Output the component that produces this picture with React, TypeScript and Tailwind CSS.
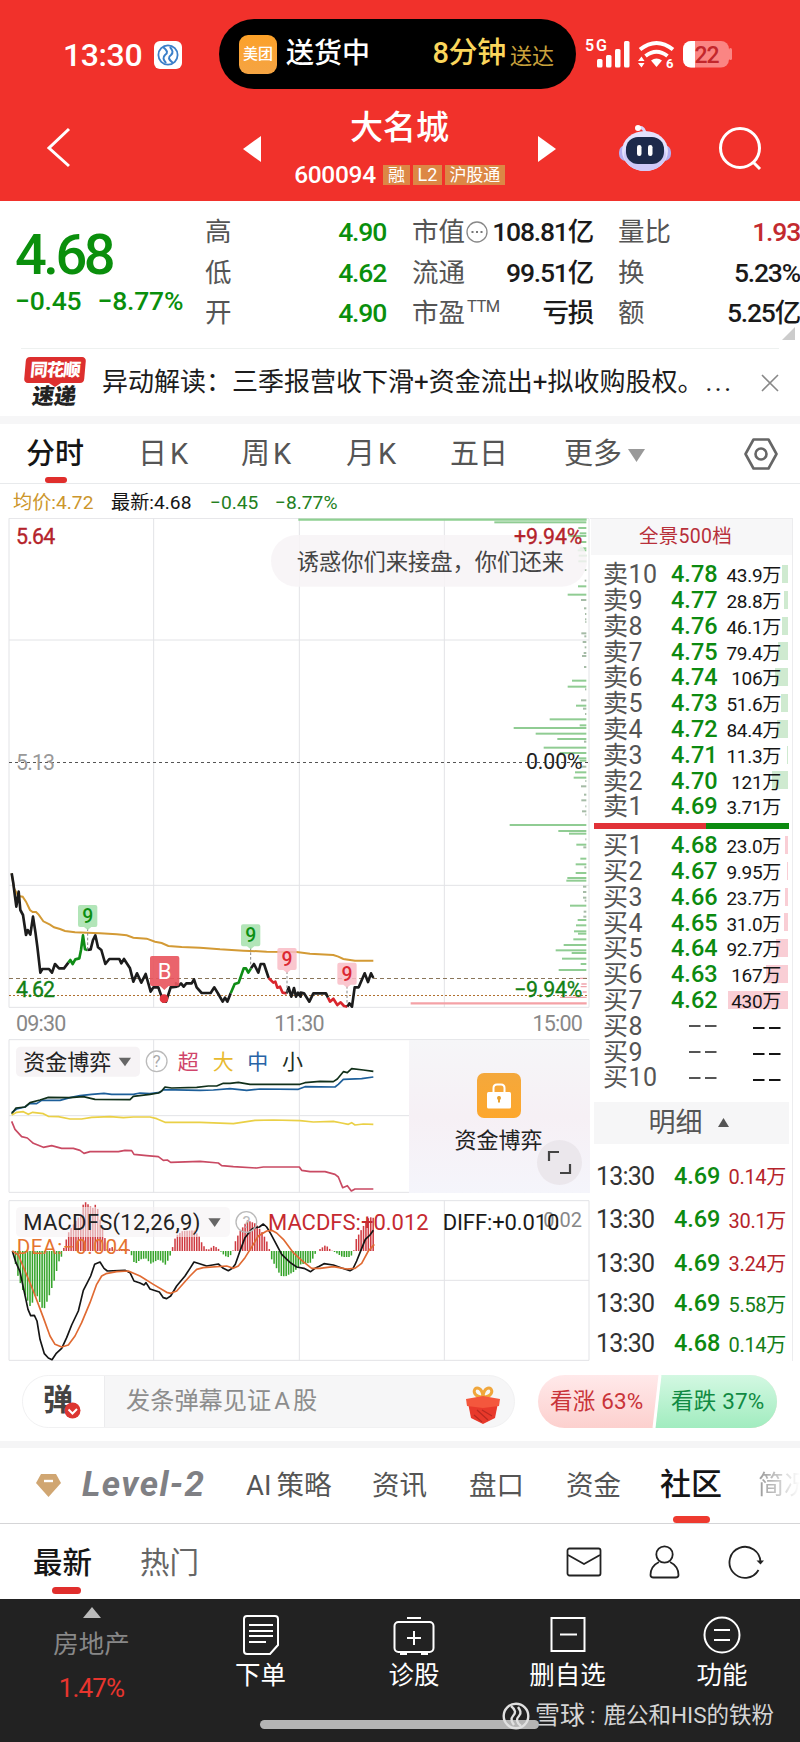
import type { ReactNode } from "react";
import clsx from "clsx";

const sells = [
  ["10", "4.78", "43.9万", 6],
  ["9", "4.77", "28.8万", 4],
  ["8", "4.76", "46.1万", 6],
  ["7", "4.75", "79.4万", 10],
  ["6", "4.74", "106万", 13],
  ["5", "4.73", "51.6万", 7],
  ["4", "4.72", "84.4万", 11],
  ["3", "4.71", "11.3万", 1],
  ["2", "4.70", "121万", 16],
  ["1", "4.69", "3.71万", 0],
] as const;

const buys = [
  ["1", "4.68", "23.0万", 3],
  ["2", "4.67", "9.95万", 1],
  ["3", "4.66", "23.7万", 3],
  ["4", "4.65", "31.0万", 4],
  ["5", "4.64", "92.7万", 12],
  ["6", "4.63", "167万", 22],
  ["7", "4.62", "430万", 60],
  ["8", "", "", 0],
  ["9", "", "", 0],
  ["10", "", "", 0],
] as const;

const trades = [
  ["4.69", "0.14万", true, "h-[43px]"],
  ["4.69", "30.1万", true, "h-[44px]"],
  ["4.69", "3.24万", true, "h-[43px]"],
  ["4.69", "5.58万", false, "h-[38px]"],
  ["4.68", "0.14万", false, "h-[42px]"],
] as const;

// [y, length] of the order depth bars along the right edge of the chart
const depth = [
  [37, 276], [54, 24], [70, 20], [78, 55], [96, 22], [115, 20], [121, 26], [137, 23], [154, 24], [180, 6],
  [212, 5], [229, 25], [254, 56], [270, 16], [295, 7], [312, 4], [328, 4], [336, 3], [370, 15], [379, 6],
  [396, 11], [412, 5], [429, 8], [438, 13], [471, 7], [512, 43], [530, 56], [538, 4], [571, 16], [587, 31],
  [596, 10], [612, 4], [628, 110], [646, 20], [654, 218], [671, 152], [687, 87], [695, 7], [713, 128],
  [729, 80], [745, 24], [752, 20], [770, 16], [787, 34], [803, 38], [813, 3], [829, 16], [854, 7], [871, 15],
  [889, 3], [904, 13], [914, 3], [945, 230], [963, 84], [971, 52], [988, 3], [1004, 30], [1012, 9],
  [1046, 18], [1063, 32], [1072, 6], [1089, 32], [1104, 57], [1112, 60], [1130, 10], [1146, 10], [1163, 10],
  [1172, 5], [1187, 49], [1205, 8], [1220, 9], [1230, 26], [1246, 31], [1264, 37], [1271, 25], [1288, 39],
  [1305, 68], [1321, 92], [1329, 44], [1346, 73], [1362, 17], [1380, 83],
];

const envelope = [
  [37, 0], [50, -70], [65, -115], [90, -170], [105, -125], [128, -180], [145, -135], [160, -90], [175, -30],
  [187, -8], [190, 15], [205, 60], [225, 90], [240, 110], [250, 150], [262, 140], [275, 128], [287, 143],
  [300, 85], [310, 50], [320, 5], [335, 12], [345, 4], [385, 4], [392, -12], [402, -40], [420, -25], [435, -22],
  [450, -38], [475, -25], [495, -42], [510, -10], [515, 10], [525, 45], [545, 60], [580, 62], [595, 45],
  [605, 20], [620, 2], [640, 16], [655, 5], [665, -8], [680, -20], [695, -8], [700, 20], [715, 55], [740, 92],
  [765, 82], [785, 55], [800, 25], [806, 4], [810, -20], [840, -75], [855, -76], [880, -62], [900, -40],
  [930, -35], [945, -5], [955, 4], [975, 18], [990, 3], [1005, -5], [1025, -18], [1050, -18], [1060, 4],
  [1066, 35], [1085, 70], [1105, 102], [1126, 98],
];

function heightAt(x: number) {
  const i = envelope.findIndex((p) => p[0] >= x);
  if (i <= 0) return 0;
  const [x0, y0] = envelope[i - 1];
  const [x1, y1] = envelope[i];
  return y0 + ((y1 - y0) * (x - x0)) / (x1 - x0);
}

const macdBars = Array.from({ length: 150 }, (_, i) => {
  const x = 37 + i * 7.25;
  return { x, h: heightAt(x) };
});

function StatusBar() {
  return (
    <div className="flex h-[108px] pt-[19px]">
      <div className="ml-[63px] flex h-[70px] w-[156px] items-center pt-[2px] text-[32px] font-medium tracking-[-0.4px]">
        13:30
        <svg className="ml-[12px]" width="28" height="28" viewBox="0 0 28 28">
          <rect width="28" height="28" rx="6" fill="#fff" />
          <circle cx="14" cy="14" r="9.6" fill="none" stroke="#3b7fc9" strokeWidth="1.8" />
          <path d="M9 6c5 4 5 6 2 8-3 3-1 5 1 8M19 22c-5-4-5-6-2-8 3-3 1-5-1-8" fill="none" stroke="#3b7fc9" strokeWidth="2" />
        </svg>
      </div>
      <div className="flex h-[70px] w-[357px] items-center rounded-full bg-black pl-5">
        <div className="flex h-[39px] w-[38px] items-center justify-center rounded-[9px] bg-gradient-to-b from-[#fca128] to-[#f5a443] text-[15px] font-medium">
          美团
        </div>
        <span className="ml-[9px] text-[28px] font-medium">送货中</span>
        <span className="ml-auto text-[29px] font-medium tracking-[-0.3px] text-[#fbd65c]">8分钟</span>
        <span className="ml-[4px] mr-[22px] pt-1 text-[22px] text-[#c9a23c]">送达</span>
      </div>
      <svg className="ml-[8px] mt-[18px]" width="150" height="34" viewBox="584 37 150 34">
        <text x="585" y="50.5" fontSize="16" fontWeight="600" fill="#fff" textLength="22">5G</text>
        <g fill="#fff">
          <rect x="597" y="59" width="5.5" height="8.5" rx="1.5" />
          <rect x="606" y="55" width="5.5" height="12.5" rx="1.5" />
          <rect x="615" y="49" width="5.5" height="18.5" rx="1.5" />
          <rect x="624" y="41" width="5.5" height="26.5" rx="1.5" />
          <path d="M651 60.5q5.500-4 11 0L656.500 67z" />
          <path d="M638 61l3.500-4.500 3 4.500zM638 63l3.500 4.500 3-4.500z" />
        </g>
        <path d="M640 49.500q16.500-13 33 0M645.500 56q11-8.500 22 0" fill="none" stroke="#fff" strokeWidth="4" />
        <text x="666" y="68" fontSize="13" fontWeight="700" fill="#fff">6</text>
        <rect x="683" y="41" width="46" height="26.500" rx="8" fill="#fb8583" />
        <path d="M695 41v26.500h-4a8 8 0 0 1-8-8V49a8 8 0 0 1 8-8z" fill="#fff" />
        <rect x="729" y="48" width="3" height="12" rx="1.500" fill="#fb8583" />
        <text x="694.500" y="62.500" fontSize="23" fontWeight="500" fill="#c3272c" textLength="25">22</text>
      </svg>
    </div>
  );
}

function TitleBar() {
  return (
    <div className="flex h-[93px] items-start">
      <svg className="ml-[44px] mt-[18px]" width="30" height="44" viewBox="0 0 30 44" fill="none" stroke="#fff" strokeWidth="3">
        <path d="M25 3L5 22l20 18" />
      </svg>
      <svg className="ml-[169px] mt-[27px]" width="18" height="28" viewBox="0 0 18 28">
        <path d="M18 1v26L0 14z" fill="#fff" />
      </svg>
      <div className="flex w-[277px] flex-col items-center">
        <div className="-mt-[2px] h-[44px] text-[33px] font-medium leading-[44px]">大名城</div>
        <div className="mt-[14px] flex h-[22px] items-center gap-[3px] text-[18px] leading-none">
          <span className="mr-[4px] text-[24.500px] font-medium tracking-[-0.3px]">600094</span>
          <span className="flex h-5 w-[27px] items-center justify-center bg-[#dc8745] text-[17px]">融</span>
          <span className="flex h-5 w-[29px] items-center justify-center bg-[#dc8745]">L2</span>
          <span className="flex h-5 w-[60px] items-center justify-center bg-[#dc8745] text-[17px]">沪股通</span>
        </div>
      </div>
      <svg className="mt-[27px]" width="18" height="28" viewBox="0 0 18 28">
        <path d="M0 1v26l18-13z" fill="#fff" />
      </svg>
      <svg className="ml-[62px] mt-[14px]" width="54" height="52" viewBox="0 0 54 52">
        <path d="M20 7q4-4 7 3" fill="none" stroke="#d9d5fb" strokeWidth="3" />
        <circle cx="20" cy="6" r="3" fill="#fff" />
        <rect x="1" y="23" width="52" height="16" rx="7" fill="#b3aef0" />
        <ellipse cx="27" cy="29" rx="23" ry="20" fill="#e4e2fd" />
        <ellipse cx="27" cy="33" rx="21" ry="16" fill="#cfcaf8" />
        <rect x="8" y="15" width="38" height="27" rx="12" fill="#1d2a4b" />
        <rect x="19" y="23" width="4.500" height="11" rx="2.200" fill="#fff" />
        <rect x="30" y="23" width="4.500" height="11" rx="2.200" fill="#fff" />
      </svg>
      <svg className="ml-[46px] mt-[18px]" width="46" height="46" viewBox="0 0 46 46" fill="none" stroke="#fff" strokeWidth="3">
        <circle cx="22" cy="22" r="19.500" />
        <path d="M35 36l7 7" />
      </svg>
    </div>
  );
}

function Stat({ label, value, tone }: { label: ReactNode; value: string; tone: string }) {
  return (
    <div className="flex h-[40.500px] items-center justify-between whitespace-nowrap">
      <span className="flex items-center text-[26.500px] text-[#555]">{label}</span>
      <span className={clsx("text-[26.500px] font-medium tracking-[-1.200px]", tone)}>{value}</span>
    </div>
  );
}

function Quote() {
  return (
    <div className="flex h-[147px] pt-[11px]">
      <div className="ml-[15px] w-[190px] text-[#0a8f0c]">
        <div className="mt-[14px] h-[58px] text-[56px] font-medium leading-[58px] tracking-[-3.500px]">4.68</div>
        <div className="flex h-[34px] items-center gap-4 text-[26.500px] font-medium tracking-[-0.200px]">
          <span>−0.45</span>
          <span>−8.77%</span>
        </div>
      </div>
      <div className="w-[181px]">
        <Stat label="高" value="4.90" tone="text-[#0a8f0c]" />
        <Stat label="低" value="4.62" tone="text-[#0a8f0c]" />
        <Stat label="开" value="4.90" tone="text-[#0a8f0c]" />
      </div>
      <div className="ml-[26px] w-[181px]">
        <Stat
          label={
            <>
              市值
              <svg className="ml-[1px]" width="22" height="22" viewBox="0 0 22 22">
                <circle cx="11" cy="11" r="10" fill="none" stroke="#888" strokeWidth="1.300" />
                <path d="M5.500 10h2v2h-2zM10 10h2v2h-2zM14.500 10h2v2h-2z" fill="#777" />
              </svg>
            </>
          }
          value="108.81亿"
          tone="text-[#1a1a1a]"
        />
        <Stat label="流通" value="99.51亿" tone="text-[#1a1a1a]" />
        <Stat
          label={
            <>
              市盈<span className="pb-3 pl-[2px] text-[16.500px] tracking-[-0.500px]">TTM</span>
            </>
          }
          value="亏损"
          tone="text-[#1a1a1a]"
        />
      </div>
      <div className="relative ml-[25px] w-[182px]">
        <Stat label="量比" value="1.93" tone="text-[#c32a2f]" />
        <Stat label="换" value="5.23%" tone="text-[#1a1a1a]" />
        <Stat label="额" value="5.25亿" tone="text-[#1a1a1a]" />
        <svg className="absolute right-[5px] top-[115px]" width="13" height="13" viewBox="0 0 13 13">
          <path d="M13 0v13H0z" fill="#ccc" />
        </svg>
      </div>
    </div>
  );
}

function Notice() {
  return (
    <div className="mx-[21px] flex h-[68px] items-center border-t border-[#eef1f0]">
      <div className="ml-[2px] flex w-[63px] flex-col items-center pt-[1px]">
        <div className="flex h-[26px] w-[60px] -skew-x-[5deg] items-center justify-center rounded-[4px] bg-[#dd2f2e] text-[17.500px] font-black tracking-[-1px] text-white">
          同花顺
        </div>
        <svg width="12" height="4" viewBox="0 0 12 4">
          <path d="M0 0h12L6 4z" fill="#dd2f2e" />
        </svg>
        <div className="h-[22px] -skew-x-[8deg] text-[22px] font-black leading-[20px] text-[#222]">速递</div>
      </div>
      <div className="ml-[16px] flex-1 whitespace-nowrap text-[26px] text-[#1c1c1c]">
        异动解读：三季报营收下滑+资金流出+拟收购股权。<span className="ml-[2px] tracking-[2.500px]">...</span>
      </div>
      <svg className="shrink-0" width="18" height="18" viewBox="0 0 18 18" stroke="#888" strokeWidth="1.600">
        <path d="M1 1l16 16M17 1L1 17" />
      </svg>
    </div>
  );
}

function PeriodTabs() {
  return (
    <div className="flex h-[60px] items-center border-b border-[#e8eaec] pt-[3px] text-[29px] text-[#555]">
      <div className="relative ml-[26px] w-[112px] font-medium text-[#151515]">
        分时
        <span className="absolute -bottom-[6px] left-[19px] h-[6px] w-[22px] rounded-full bg-[#e02e2c]" />
      </div>
      <div className="w-[103px] tracking-[3px]">日K</div>
      <div className="w-[105px] tracking-[3px]">周K</div>
      <div className="w-[104px] tracking-[3px]">月K</div>
      <div className="w-[114px]">五日</div>
      <div className="flex w-[180px] items-center gap-[6px]">
        更多
        <svg width="17" height="13" viewBox="0 0 17 13">
          <path d="M0 0h17L8.500 13z" fill="#999" />
        </svg>
      </div>
      <svg className="-mt-[2px]" width="34" height="34" viewBox="0 0 34 34" fill="none" stroke="#666" strokeWidth="2.600">
        <path d="M9.500 2.500h15L32.500 17l-8 14.500h-15L1.500 17z" strokeLinejoin="round" />
        <circle cx="17" cy="17" r="5.500" />
      </svg>
    </div>
  );
}

function Flag({ x, y, up, tip }: { x: number; y: number; up?: boolean; tip: number }) {
  return (
    <g>
      <path d={`M${x} ${y + 70}V${tip}`} stroke="#888" strokeWidth="3" strokeDasharray="8 6" />
      <path
        d={`M${x - 23} ${y}h46q6 0 6 6v54q0 6-6 6h-12l-11 9-11-9h-12q-6 0-6-6V${y + 6}q0-6 6-6z`}
        fill={up ? "#a4e0ac" : "#f9bcc6"}
        fillOpacity="0.85"
      />
      <text x={x} y={y + 54} textAnchor="middle" fontSize="58" fontWeight="500" fill={up ? "#0b8f12" : "#dc2832"}>
        9
      </text>
    </g>
  );
}

// Chart drawings use three units per pixel.
function PriceChart() {
  return (
    <svg className="block" width="590" height="490" viewBox="0 -996 1770 1470">
      <g fill="none" stroke="#e2e3e6" strokeWidth="3">
        <path d="M27-995H1767M27-630H1767M27 106H1767M27 472H1767M27-995V472M461-995V472M898-995V472M1333-995V472M1767-995V472" />
      </g>
      <path d="M895-991H1760" stroke="#8fd092" strokeWidth="7" fill="none" />
      <g transform="translate(1140 -1020)">
        {depth.map(([y, w]) => (
          <rect key={y} x={619 - w} y={y - 3} width={w} height="6" fill={w > 16 ? "#90cc93" : "#a5bba6"} />
        ))}
        <path d="M600 1405h20M604 1422h16M602 1430h18M608 1446h12M540 1462h80" stroke="#f0a3ac" strokeWidth="4" />
        <path d="M92 1480h528" stroke="#f4a1a6" strokeWidth="7" />
      </g>
      <rect x="813" y="-945" width="948" height="155" rx="77" fill="#f7f3f6" fillOpacity="0.85" />
      <path d="M27-262.500H1767" stroke="#555" strokeWidth="3" strokeDasharray="9 9" />
      <path d="M27 385.500H1767" stroke="#8a765a" strokeWidth="3" strokeDasharray="12 9" />
      <path d="M27 436.500H1767" stroke="#b0702f" strokeWidth="3" strokeDasharray="6 6" />
      <polyline
        fill="none"
        stroke="#d39a35"
        strokeWidth="6"
        points="35,70 42,115 55,138 68,140 78,155 90,180 98,186 108,186 116,194 130,214 150,224 162,232 180,237 195,243 225,247 260,248 300,250 350,253 380,256 400,263 440,266 465,275 485,279 505,288 545,291 600,293 660,298 730,302 800,305 890,306 930,311 1000,315 1015,320 1030,327 1065,332 1120,332"
      />
      <g fill="none" strokeWidth="8" strokeLinejoin="round">
        <polyline
          stroke="#1c1c1c"
          points="35,70 40,100 45,140 49,170 56,125 61,180 69,195 78,255 83,240 91,254 99,200 106,245 112,290 121,368 127,357 147,357 156,368 165,342 177,355 192,355 205,338"
        />
        <polyline stroke="#0f8d16" points="205,338 211,330 218,342 226,328 238,325 243,300 249,256 255,298 262,300" />
        <polyline
          stroke="#1c1c1c"
          points="262,300 272,298 279,270 286,256 294,292 304,300 316,342 328,327 358,327 364,340 372,327 390,355 400,395 411,370 424,398 437,372 452,425 460,412 475,412 490,455 498,455 512,412 530,410 528,400 535,408 543,400 551,410 559,400 575,400 582,388 590,412 605,429 632,429 643,412 655,432 668,455 675,443 682,455 692,430"
        />
        <polyline stroke="#0f8d16" points="692,430 704,402 716,398 731,355 738,355 745,368 753,355" />
        <polyline stroke="#1c1c1c" points="753,355 762,342 775,368 782,342 792,342 806,384" />
        <polyline stroke="#d9262d" points="806,384 820,398 826,395 832,413 840,410 848,428 860,430" />
        <polyline
          stroke="#1c1c1c"
          points="860,430 866,412 874,440 882,414 888,440 894,428 902,440 902,428 912,430 928,455 940,430 978,430 984,443"
        />
        <polyline stroke="#d9262d" points="984,443 990,455 1000,446 1012,465 1022,457 1032,468 1042,470" />
        <polyline
          stroke="#1c1c1c"
          points="1042,470 1048,460 1056,470 1064,412 1076,412 1094,370 1104,396 1113,370 1120,384"
        />
      </g>
      <circle cx="492" cy="446" r="13" fill="#e3353e" />
      <path d="M456 318h76q6 0 6 6v78q0 6-6 6h-26l-13 12-13-12h-24q-6 0-6-6v-78q0-6 6-6z" fill="#e85760" fillOpacity="0.92" />
      <text x="494" y="386" textAnchor="middle" fontSize="66" fill="#fff">B</text>
      <Flag x={263} y={165} tip={300} up />
      <Flag x={752} y={223} tip={350} up />
      <Flag x={861} y={294} tip={430} />
      <Flag x={1041} y={338} tip={465} />
      <g fontSize="64">
        <text x="48" y="-917" fill="#b4232b" stroke="#b4232b" strokeWidth="1" textLength="118">5.64</text>
        <text x="48" y="-240" fill="#999" textLength="117">5.13</text>
        <text x="48" y="440" fill="#128016" stroke="#128016" strokeWidth="1" textLength="117">4.62</text>
        <text x="1542" y="-917" fill="#b4232b" stroke="#b4232b" strokeWidth="1" textLength="205">+9.94%</text>
        <text x="1578" y="-243" fill="#222" textLength="170">0.00%</text>
        <text x="1542" y="441" fill="#128016" stroke="#128016" strokeWidth="1" textLength="205">−9.94%</text>
      </g>
      <text x="890" y="-841" fontSize="67" fill="#444" textLength="802">诱惑你们来接盘，你们还来</text>
    </svg>
  );
}

function FundChart() {
  return (
    <div className="relative">
      <svg className="block" width="590" height="154" viewBox="0 24 1770 462">
        <path
          d="M27 26H1767M27 254H1767M27 484H1767M27 26V484M461 26V484M898 26V484M1767 26V484"
          fill="none"
          stroke="#e2e3e6"
          strokeWidth="3"
        />
        <g fill="none" strokeWidth="5" strokeLinejoin="round">
          <polyline
            stroke="#1d5f9a"
            points="35,245 50,234 75,228 90,217 110,218 125,208 180,208 210,200 240,194 275,190 312,187 335,190 400,190 420,186 450,188 480,184 490,176 600,178 640,177 690,173 740,178 780,174 895,175 915,167 1005,168 1015,160 1030,145 1085,143 1120,138"
          />
          <polyline
            stroke="#11301a"
            points="35,248 48,231 75,228 90,215 120,207 145,199 210,200 250,197 285,205 390,206 400,196 450,190 475,186 485,180 495,168 515,171 590,169 625,165 650,165 670,157 690,157 715,154 750,160 900,160 915,155 960,151 1000,152 1012,144 1030,122 1042,125 1055,113 1090,117 1120,121"
          />
          <polyline
            stroke="#ead046"
            points="35,252 50,244 70,242 85,250 98,244 130,248 145,256 175,257 210,264 245,264 275,259 330,257 370,260 400,258 450,258 470,263 495,274 600,274 700,278 765,268 820,267 900,269 940,273 1000,271 1025,276 1045,280 1055,275 1065,282 1090,279 1120,280"
          />
          <polyline
            stroke="#c94a63"
            points="35,271 45,295 65,317 82,321 100,337 130,349 155,344 185,352 220,352 240,358 252,367 270,362 355,362 375,358 395,359 402,370 440,374 475,377 490,388 502,387 512,394 600,391 655,396 665,404 700,407 770,411 790,408 898,408 905,418 930,422 975,422 1005,430 1015,438 1028,470 1042,464 1054,480 1065,474 1120,474"
          />
        </g>
        <rect x="48" y="47" width="372" height="90" rx="14" fill="#f5f2f4" fillOpacity="0.9" />
        <text x="70" y="116" fontSize="66" fill="#222">资金博弈</text>
        <path d="M356 80h37l-18 26z" fill="#666" />
        <circle cx="470" cy="91" r="31" fill="none" stroke="#bbb" strokeWidth="4" />
        <text x="470" y="109" textAnchor="middle" fontSize="50" fill="#aaa">?</text>
        <g fontSize="63">
          <text x="533" y="115" fill="#d0456b">超</text>
          <text x="638" y="115" fill="#e8ba2f">大</text>
          <text x="742" y="115" fill="#2863a6">中</text>
          <text x="846" y="115" fill="#1b2d1e">小</text>
        </g>
      </svg>
      <div className="absolute left-[409px] top-[1px] flex h-[153px] w-[181px] flex-col items-center bg-linear-to-b from-[#f6f6f8] via-[#f6f0f5] to-[#f5f5fb] pr-[2px] pt-[33px]">
        <div className="flex h-[45px] w-[44px] items-center justify-center rounded-[7px] bg-linear-to-b from-[#f4a83c] to-[#fda72c]">
          <svg width="26" height="28" viewBox="0 0 26 28">
            <path d="M7.500 11V6q0-3.500 3.500-3.500h4q3.500 0 3.500 3.500v5" fill="none" stroke="#fff" strokeWidth="2" />
            <rect x="1" y="10" width="24" height="16.500" rx="1.500" fill="#fff" />
            <path d="M13 14.500v6" stroke="#e8a02e" strokeWidth="2" />
            <circle cx="13" cy="16" r="2" fill="#e8a02e" />
          </svg>
        </div>
        <div className="mt-[7px] text-[22px] leading-[32px] text-[#222]">资金博弈</div>
        <div className="absolute bottom-[8px] right-[8px] h-[45px] w-[45px] rounded-full bg-[#e9e4e9]/80">
          <svg width="45" height="45" viewBox="0 0 45 45" fill="none" stroke="#444" strokeWidth="2.200">
            <path d="M12 21V12h10M33 24v9H23" />
          </svg>
        </div>
      </div>
    </div>
  );
}

function MacdChart() {
  return (
    <svg className="mt-[7px] block" width="590" height="161" viewBox="0 507 1770 483">
      <path
        d="M27 509H1767M27 748H1767M27 988H1767M27 509V988M461 509V988M898 509V988M1333 509V988M1767 509V988"
        fill="none"
        stroke="#e2e3e6"
        strokeWidth="3"
      />
      {macdBars.map(({ x, h }) => (
        <rect key={x} x={x} y={h > 0 ? 660 - h : 660} width="4.600" height={Math.abs(h)} fill={h > 0 ? "#cf3b42" : "#35a42a"} />
      ))}
      <rect x="48" y="528" width="642" height="90" rx="14" fill="#f5f1f4" fillOpacity="0.6" />
      <g fill="none" strokeWidth="5" strokeLinejoin="round">
        <polyline
          stroke="#151515"
          points="37,660 48,695 60,722 70,770 84,835 92,854 103,853 111,870 120,925 133,968 145,981 156,986 168,968 185,952 200,920 215,882 235,840 250,778 262,755 272,735 284,700 300,693 312,712 322,720 375,718 390,725 402,750 420,756 432,762 438,755 450,774 478,783 490,800 500,803 512,795 530,765 555,735 570,712 582,693 620,705 655,699 670,712 685,719 697,712 706,700 720,660 735,620 755,595 765,590 778,588 790,579 800,588 812,608 845,670 870,694 890,708 912,712 932,722 945,712 958,706 972,698 1000,702 1025,711 1050,719 1058,715 1070,690 1080,665 1096,625 1110,612 1120,598"
        />
        <polyline
          stroke="#e06a32"
          points="37,660 55,672 75,720 100,780 130,860 150,915 165,940 185,948 205,942 225,915 245,875 270,815 290,760 305,735 318,728 350,722 385,720 420,735 460,760 500,784 512,787 530,780 570,735 590,715 610,710 680,705 700,712 715,705 735,680 760,640 775,615 800,600 815,598 830,606 850,625 880,665 905,688 935,712 960,712 1000,707 1040,714 1065,712 1085,697 1105,660 1123,640"
        />
      </g>
      <text x="70" y="598" fontSize="66" fill="#222" textLength="531">MACDFS(12,26,9)</text>
      <path d="M625 562h37l-18 26z" fill="#666" />
      <circle cx="739" cy="573" r="31" fill="none" stroke="#bbb" strokeWidth="4" />
      <text x="739" y="591" textAnchor="middle" fontSize="50" fill="#bbb">?</text>
      <text x="804" y="597" fontSize="66" fill="#c62a30" textLength="482">MACDFS:+0.012</text>
      <text x="1630" y="588" fontSize="60" fill="#888" textLength="116">0.02</text>
      <text x="1328" y="597" fontSize="66" fill="#1a1a1a" textLength="350">DIFF:+0.010</text>
      <text x="50" y="668" fontSize="62" fill="#e5742f" textLength="338">DEA:−0.004</text>
    </svg>
  );
}

function Dashes({ className }: { className: string }) {
  return (
    <svg className={clsx("ml-auto", className)} width="28" height="4" viewBox="0 0 28 4">
      <path d="M0 2h11.500M16 2h11.500" stroke="currentColor" strokeWidth="2.200" />
    </svg>
  );
}

function BookRow({ side, row }: { side: "卖" | "买"; row: readonly [string, string, string, number] }) {
  const [level, price, volume, bar] = row;
  return (
    <div className="relative flex h-[25.800px] items-center whitespace-nowrap">
      <span
        className={clsx("absolute right-[4px] top-[3px] h-[18px]", side === "卖" ? "bg-[#cfead0]" : "bg-[#f9ced5]")}
        style={{ width: bar }}
      />
      <span className="relative ml-[12px] w-[68px] text-[25px] tracking-[0.500px] text-[#555]">
        {side}
        {level}
      </span>
      <span className="relative w-[46px] text-right text-[23.500px] font-medium text-[#0c8a10]">
        {price || <Dashes className="text-[#555]" />}
      </span>
      <span className="relative mt-[3px] w-[64px] text-right text-[19px] tracking-[-0.300px] text-[#151515]">
        {volume || <Dashes className="text-[#151515]" />}
      </span>
    </div>
  );
}

function OrderBook() {
  return (
    <div className="w-[203px] border-r border-t border-[#ececee] pl-[1px]">
      <div className="flex h-[36px] items-center justify-center bg-[#f7f7f8] pr-[12px] text-[19.500px] tracking-[0.300px] text-[#b8303a]">
        全景500档
      </div>
      <div className="pt-[7px]">
        {sells.map((row) => (
          <BookRow key={row[0]} side="卖" row={row} />
        ))}
      </div>
      <div className="ml-[3px] mt-[3px] flex h-[6px] w-[195px]">
        <div className="w-[112px] bg-[#e13238]" />
        <div className="flex-1 bg-[#0c8a10]" />
      </div>
      <div className="pt-[4px]">
        {buys.map((row) => (
          <BookRow key={row[0]} side="买" row={row} />
        ))}
      </div>
      <div className="ml-[3px] mt-[11px] flex h-[42px] w-[195px] items-center justify-center gap-[15px] bg-[#f6f6f7] pr-[6px] text-[27px] text-[#555]">
        明细
        <svg width="11" height="9" viewBox="0 0 11 9">
          <path d="M5.500 0L11 9H0z" fill="#555" />
        </svg>
      </div>
      <div className="pt-[11px]">
        {trades.map(([price, volume, up, height], i) => (
          <div key={i} className={clsx("flex items-center whitespace-nowrap", height)}>
            <span className="ml-[5px] w-[78px] text-[25px] tracking-[-0.800px] text-[#333]">13:30</span>
            <span className="w-[46px] text-[23.500px] font-medium tracking-[-0.100px] text-[#0c8a10]">{price}</span>
            <span
              className={clsx("mt-[2px] w-[66px] text-right text-[20px] tracking-[-0.300px]", up ? "text-[#b5242b]" : "text-[#137d18]")}
            >
              {volume}
            </span>
          </div>
        ))}
      </div>
    </div>
  );
}

function Danmaku() {
  return (
    <div className="flex h-[80px] items-start pt-[14px]">
      <div className="ml-[22px] flex h-[53px] w-[493px] items-center overflow-hidden rounded-full border border-[#f1f1f2] bg-[#f6f6f7]">
        <div className="relative flex h-full w-[82px] items-center border-r border-[#ececee] bg-white pb-[4px] pl-[20px] text-[30px] font-bold text-[#444]">
          弹
          <svg className="absolute left-[41px] top-[26px]" width="17" height="17" viewBox="0 0 17 17">
            <circle cx="8.500" cy="8.500" r="8" fill="#dc3632" />
            <path d="M4.500 7.500l4 4 4.500-4.500" fill="none" stroke="#fff" strokeWidth="2" />
          </svg>
        </div>
        <span className="ml-[21px] text-[24.200px] text-[#8d8d8d]">
          发条弹幕见证<span className="mx-[3px]">A</span>股
        </span>
        <svg className="ml-auto mr-[12px] mt-[6px]" width="38" height="40" viewBox="0 0 38 40">
          <path d="M19 12C8 12 9 3 13 3s6 5 6 9c0-4 2-9 6-9s5 9-6 9z" fill="none" stroke="#f0a63c" strokeWidth="3" />
          <path d="M4 18h30l-3 15-12 6-12-6z" fill="#e8392b" />
          <path d="M2 14l17-3 17 3-1 7-16 2-16-2z" fill="#f4573d" />
          <path d="M13 25l11 10M10 30l8 7M18 25l10 6" stroke="#b92a20" strokeWidth="1.200" />
        </svg>
      </div>
      <div className="relative ml-[23px] flex h-[53px] w-[239px] items-center overflow-hidden rounded-full bg-linear-to-b from-[#ffe9ea] to-[#fcd0ce] text-[22px]">
        <svg className="absolute inset-0" width="239" height="53" viewBox="0 0 239 53">
          <defs>
            <linearGradient id="fall" x1="0" x2="0" y1="0" y2="1">
              <stop offset="0" stopColor="#d3f8e2" />
              <stop offset="1" stopColor="#a1ecbf" />
            </linearGradient>
          </defs>
          <path d="M123 0h116v53H117z" fill="url(#fall)" />
          <path d="M122 0l-6 53" stroke="#fff" strokeWidth="3" />
        </svg>
        <span className="relative ml-[12px] w-[121px] whitespace-nowrap text-[22.500px] tracking-[0.200px] text-[#c93439]">看涨 63%</span>
        <span className="relative whitespace-nowrap text-[22.500px] tracking-[0.200px] text-[#118a43]">看跌 37%</span>
      </div>
    </div>
  );
}

function SectionTabs() {
  return (
    <div className="flex h-[76px] items-center whitespace-nowrap border-b border-[#d5d5d7] text-[27.500px] text-[#555]">
      <svg className="ml-[36px]" width="25" height="23" viewBox="0 0 25 23">
        <path d="M5 0h15l5 9-12.500 14L0 9z" fill="#d0a672" />
        <path d="M8 7h9" stroke="#fff" strokeWidth="2.400" />
      </svg>
      <div className="ml-[21px] w-[164px] text-[35px] font-bold italic tracking-[1.400px] text-[#7f8084]">Level-2</div>
      <div className="w-[126px]">
        AI<span className="ml-[5px]">策略</span>
      </div>
      <div className="w-[97px]">资讯</div>
      <div className="w-[97px]">盘口</div>
      <div className="w-[94px]">资金</div>
      <div className="relative w-[98px] text-[31px] font-medium text-[#151515]">
        社区
        <span className="absolute -bottom-[14px] left-[13px] h-[7px] w-[37px] rounded-full bg-[#ee3a2f]" />
      </div>
      <div className="w-[42px] overflow-hidden bg-linear-to-r from-[#999] to-white bg-clip-text text-[26px] text-transparent">简况</div>
    </div>
  );
}

function FeedTabs() {
  return (
    <div className="flex h-[75px] items-center text-[29.500px]">
      <div className="relative ml-[33px] w-[107px] pt-[3px] font-medium text-[#151515]">
        最新
        <span className="absolute -bottom-[9px] left-[19px] h-[7px] w-[29px] rounded-full bg-[#e02e2c]" />
      </div>
      <div className="w-[426px] pt-[3px] text-[#666]">热门</div>
      <svg width="36" height="30" viewBox="0 0 36 30" fill="none" stroke="#222" strokeWidth="1.800">
        <rect x="1.500" y="1.500" width="33" height="27" rx="2" />
        <path d="M2 8l16 9 16-9" />
      </svg>
      <svg className="ml-[47px]" width="31" height="34" viewBox="0 0 31 34" fill="none" stroke="#222" strokeWidth="1.800">
        <circle cx="15.500" cy="9.500" r="8.200" />
        <path d="M10 17C4 20 1.500 24 1.500 30q0 2.500 3 2.500h22q3 0 3-2.500c0-6-2.500-10-8.500-13" />
      </svg>
      <svg className="ml-[48px]" width="36" height="34" viewBox="0 0 36 34" fill="none" stroke="#222" strokeWidth="1.800">
        <path d="M30.500 25A15.500 15.500 0 1 1 32.500 17" />
        <path d="M28.500 15.500h7.500l-3.500 4z" fill="#222" stroke="none" />
      </svg>
    </div>
  );
}

function NavItem({ label, width, children }: { label: string; width: string; children: ReactNode }) {
  return (
    <div className={clsx("flex flex-col items-center pt-[15px]", width)}>
      <svg width="44" height="42" viewBox="0 0 44 42" fill="none" stroke="#fff" strokeWidth="2">
        {children}
      </svg>
      <span className="mt-[1px] text-[25.500px] leading-[36px] text-white">{label}</span>
    </div>
  );
}

function BottomNav() {
  return (
    <div className="relative flex h-[143px] bg-[#222]">
      <div className="flex w-[183px] flex-col items-center pt-[8px]">
        <svg width="18" height="11" viewBox="0 0 18 11">
          <path d="M9 0l9 11H0z" fill="#bbb" />
        </svg>
        <span className="mt-[8px] text-[25.500px] leading-[36px] text-[#888]">房地产</span>
        <span className="mt-[8px] text-[26px] leading-[36px] tracking-[-0.800px] text-[#e8352e]">1.47%</span>
      </div>
      <NavItem label="下单" width="w-[155px]">
        <path d="M8 2h28q3 0 3 3v26l-8 9H8q-3 0-3-3V5q0-3 3-3z" />
        <path d="M10 11h24M10 17h24M10 22h24M10 28h17" />
      </NavItem>
      <NavItem label="诊股" width="w-[152px]">
        <rect x="2.500" y="8" width="39" height="30" rx="4" />
        <path d="M15 4h14M8 40h7M29 40h7M22 17v14M15 24h14" />
      </NavItem>
      <NavItem label="删自选" width="w-[155px]">
        <rect x="5.500" y="4" width="33" height="33" />
        <path d="M14 20.500h17" />
      </NavItem>
      <NavItem label="功能" width="w-[154px]">
        <circle cx="22" cy="21" r="17.500" />
        <path d="M14 16h16M14 26h16" />
      </NavItem>
      <div className="absolute bottom-[13px] left-[260px] h-[9px] w-[279px] rounded-full bg-[#b5b5b5]" />
      <div className="absolute bottom-[10px] left-[502px] flex h-[32px] items-center whitespace-nowrap text-[22.500px] text-[#d5d5d5]">
        <svg width="28" height="28" viewBox="0 0 28 28" fill="none" stroke="#e0e0e0" strokeWidth="2.400">
          <circle cx="14" cy="14" r="12.300" />
          <path d="M9 4c5 4 5 7 2 10-3 3-1 6 1 9M19 24c-5-4-5-7-2-10 3-3 1-6-1-9" />
        </svg>
        <span className="ml-[5px] text-[25px]">雪球</span>
        <span className="ml-[5px] mr-[8px]">:</span>鹿公和HIS的铁粉
      </div>
    </div>
  );
}

export default function App() {
  return (
    <div className="h-[1742px] w-[800px] overflow-hidden bg-white font-['Roboto','Noto_Sans_CJK_SC',sans-serif]">
      <header className="h-[201px] bg-[#f1312b] text-white">
        <StatusBar />
        <TitleBar />
      </header>
      <Quote />
      <Notice />
      <div className="h-[8px] bg-[#f6f6f7]" />
      <PeriodTabs />
      <div className="flex h-[34px] items-center whitespace-nowrap pl-[13px] pt-[5px] text-[19.200px]">
        <span className="w-[98px] text-[#cc962c]">均价:4.72</span>
        <span className="w-[99px] text-[#151515]">最新:4.68</span>
        <span className="w-[65px] text-[#23801d]">−0.45</span>
        <span className="text-[#23801d]">−8.77%</span>
      </div>
      <main className="flex h-[843px]">
        <div className="w-[590px]">
          <PriceChart />
          <div className="flex h-[31px] items-center justify-between pl-[16px] pr-[8px] pt-[1px] text-[21.500px] tracking-[-0.800px] text-[#888]">
            <span className="w-[100px]">09:30</span>
            <span>11:30</span>
            <span className="w-[100px] text-right">15:00</span>
          </div>
          <FundChart />
          <MacdChart />
        </div>
        <OrderBook />
      </main>
      <Danmaku />
      <div className="h-[7px] bg-[#f5f5f6]" />
      <SectionTabs />
      <FeedTabs />
      <BottomNav />
    </div>
  );
}
